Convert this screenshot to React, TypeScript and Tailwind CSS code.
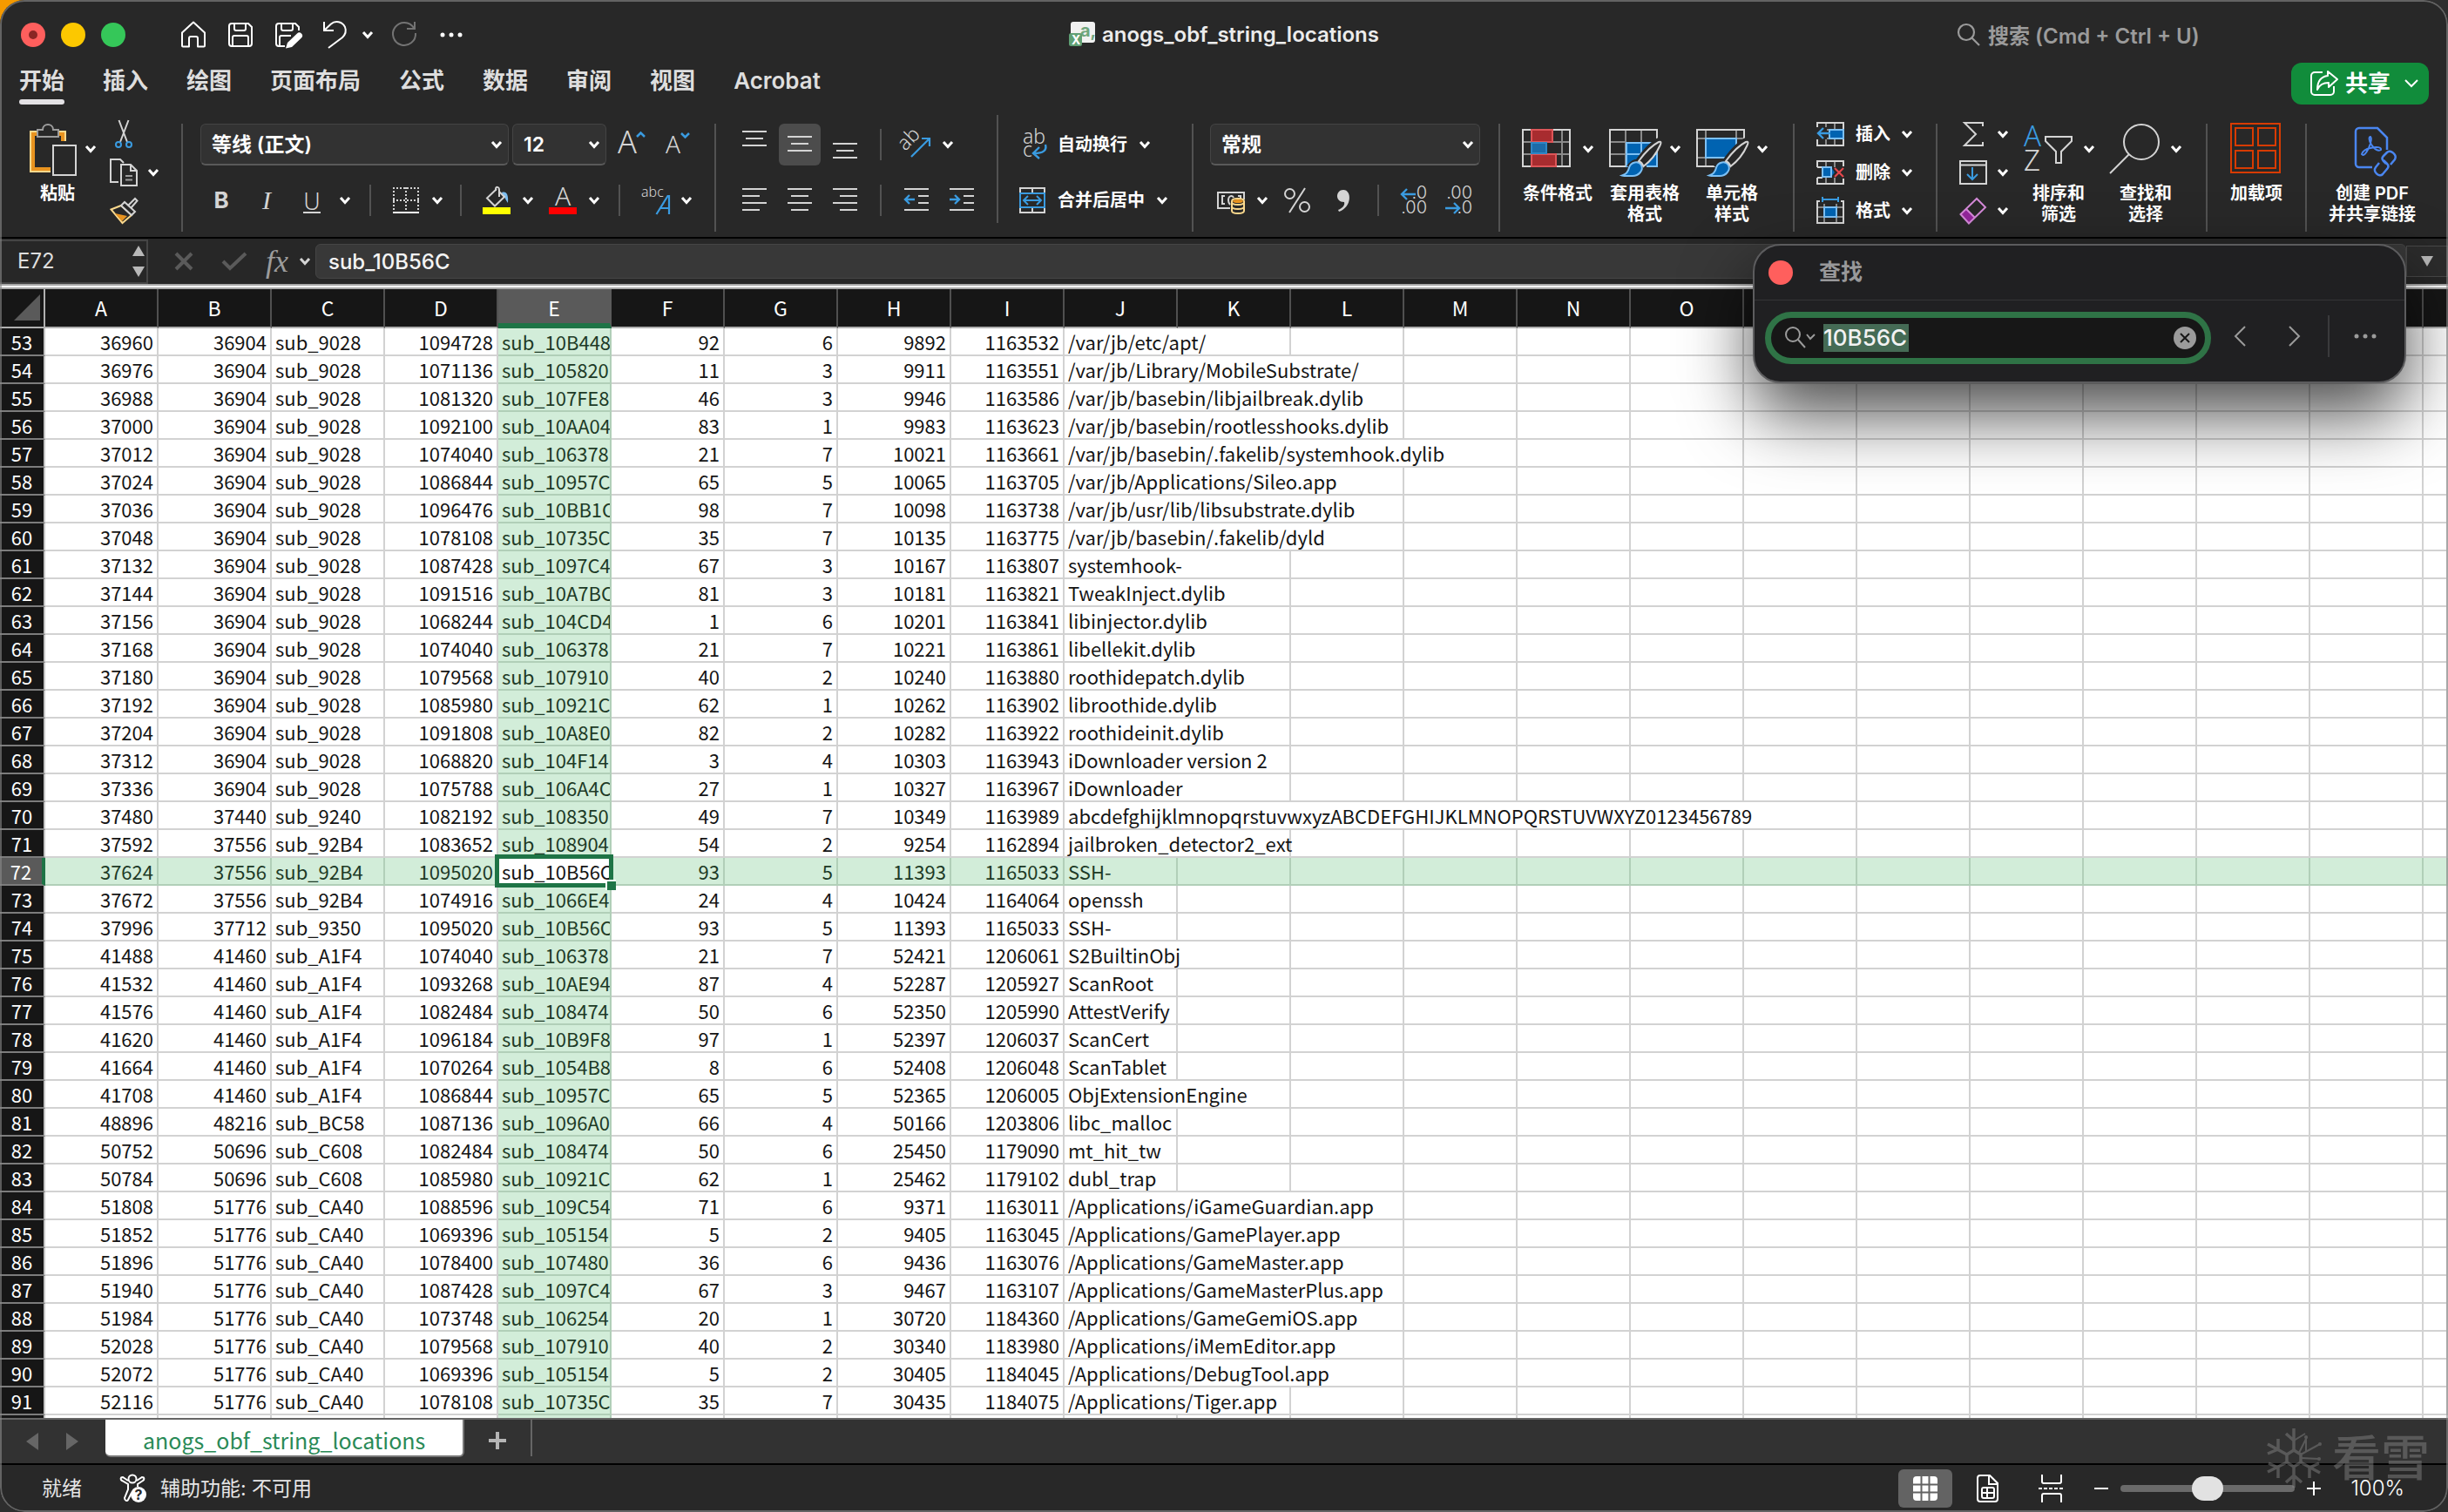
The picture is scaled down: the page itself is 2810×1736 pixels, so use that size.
import type { ReactNode } from 'react'
import clsx from 'clsx'

type Row = {
    a: number,
    b: number,
    c: string,
    d: number,
    e: string,
    f: number,
    g: number,
    h: number,
    i: number,
    j: string,
    span: number
}

// first visible row of the sheet
const FIRST_ROW = 53
const ACTIVE_ROW = 72

const COLUMNS = 'ABCDEFGHIJKLMNOPQRSTU'.split('')

// span = how many columns the text in J runs over
const raw: [number, number, string, number, string, number, number, number, number, string, number][] = [
    [36960, 36904, 'sub_9028', 1094728, 'sub_10B448', 92, 6, 9892, 1163532, '/var/jb/etc/apt/', 2],
    [36976, 36904, 'sub_9028', 1071136, 'sub_105820', 11, 3, 9911, 1163551, '/var/jb/Library/MobileSubstrate/', 3],
    [36988, 36904, 'sub_9028', 1081320, 'sub_107FE8', 46, 3, 9946, 1163586, '/var/jb/basebin/libjailbreak.dylib', 3],
    [37000, 36904, 'sub_9028', 1092100, 'sub_10AA04', 83, 1, 9983, 1163623, '/var/jb/basebin/rootlesshooks.dylib', 3],
    [37012, 36904, 'sub_9028', 1074040, 'sub_106378', 21, 7, 10021, 1163661, '/var/jb/basebin/.fakelib/systemhook.dylib', 4],
    [37024, 36904, 'sub_9028', 1086844, 'sub_10957C', 65, 5, 10065, 1163705, '/var/jb/Applications/Sileo.app', 3],
    [37036, 36904, 'sub_9028', 1096476, 'sub_10BB1C', 98, 7, 10098, 1163738, '/var/jb/usr/lib/libsubstrate.dylib', 3],
    [37048, 36904, 'sub_9028', 1078108, 'sub_10735C', 35, 7, 10135, 1163775, '/var/jb/basebin/.fakelib/dyld', 3],
    [37132, 36904, 'sub_9028', 1087428, 'sub_1097C4', 67, 3, 10167, 1163807, 'systemhook-', 2],
    [37144, 36904, 'sub_9028', 1091516, 'sub_10A7BC', 81, 3, 10181, 1163821, 'TweakInject.dylib', 2],
    [37156, 36904, 'sub_9028', 1068244, 'sub_104CD4', 1, 6, 10201, 1163841, 'libinjector.dylib', 2],
    [37168, 36904, 'sub_9028', 1074040, 'sub_106378', 21, 7, 10221, 1163861, 'libellekit.dylib', 2],
    [37180, 36904, 'sub_9028', 1079568, 'sub_107910', 40, 2, 10240, 1163880, 'roothidepatch.dylib', 2],
    [37192, 36904, 'sub_9028', 1085980, 'sub_10921C', 62, 1, 10262, 1163902, 'libroothide.dylib', 2],
    [37204, 36904, 'sub_9028', 1091808, 'sub_10A8E0', 82, 2, 10282, 1163922, 'roothideinit.dylib', 2],
    [37312, 36904, 'sub_9028', 1068820, 'sub_104F14', 3, 4, 10303, 1163943, 'iDownloader version 2', 2],
    [37336, 36904, 'sub_9028', 1075788, 'sub_106A4C', 27, 1, 10327, 1163967, 'iDownloader', 2],
    [37480, 37440, 'sub_9240', 1082192, 'sub_108350', 49, 7, 10349, 1163989, 'abcdefghijklmnopqrstuvwxyzABCDEFGHIJKLMNOPQRSTUVWXYZ0123456789', 7],
    [37592, 37556, 'sub_92B4', 1083652, 'sub_108904', 54, 2, 9254, 1162894, 'jailbroken_detector2_ext', 2],
    [37624, 37556, 'sub_92B4', 1095020, 'sub_10B56C', 93, 5, 11393, 1165033, 'SSH-', 1],
    [37672, 37556, 'sub_92B4', 1074916, 'sub_1066E4', 24, 4, 10424, 1164064, 'openssh', 1],
    [37996, 37712, 'sub_9350', 1095020, 'sub_10B56C', 93, 5, 11393, 1165033, 'SSH-', 1],
    [41488, 41460, 'sub_A1F4', 1074040, 'sub_106378', 21, 7, 52421, 1206061, 'S2BuiltinObj', 2],
    [41532, 41460, 'sub_A1F4', 1093268, 'sub_10AE94', 87, 4, 52287, 1205927, 'ScanRoot', 1],
    [41576, 41460, 'sub_A1F4', 1082484, 'sub_108474', 50, 6, 52350, 1205990, 'AttestVerify', 1],
    [41620, 41460, 'sub_A1F4', 1096184, 'sub_10B9F8', 97, 1, 52397, 1206037, 'ScanCert', 1],
    [41664, 41460, 'sub_A1F4', 1070264, 'sub_1054B8', 8, 6, 52408, 1206048, 'ScanTablet', 1],
    [41708, 41460, 'sub_A1F4', 1086844, 'sub_10957C', 65, 5, 52365, 1206005, 'ObjExtensionEngine', 2],
    [48896, 48216, 'sub_BC58', 1087136, 'sub_1096A0', 66, 4, 50166, 1203806, 'libc_malloc', 1],
    [50752, 50696, 'sub_C608', 1082484, 'sub_108474', 50, 6, 25450, 1179090, 'mt_hit_tw', 1],
    [50784, 50696, 'sub_C608', 1085980, 'sub_10921C', 62, 1, 25462, 1179102, 'dubl_trap', 1],
    [51808, 51776, 'sub_CA40', 1088596, 'sub_109C54', 71, 6, 9371, 1163011, '/Applications/iGameGuardian.app', 3],
    [51852, 51776, 'sub_CA40', 1069396, 'sub_105154', 5, 2, 9405, 1163045, '/Applications/GamePlayer.app', 3],
    [51896, 51776, 'sub_CA40', 1078400, 'sub_107480', 36, 6, 9436, 1163076, '/Applications/GameMaster.app', 3],
    [51940, 51776, 'sub_CA40', 1087428, 'sub_1097C4', 67, 3, 9467, 1163107, '/Applications/GameMasterPlus.app', 3],
    [51984, 51776, 'sub_CA40', 1073748, 'sub_106254', 20, 1, 30720, 1184360, '/Applications/GameGemiOS.app', 3],
    [52028, 51776, 'sub_CA40', 1079568, 'sub_107910', 40, 2, 30340, 1183980, '/Applications/iMemEditor.app', 3],
    [52072, 51776, 'sub_CA40', 1069396, 'sub_105154', 5, 2, 30405, 1184045, '/Applications/DebugTool.app', 3],
    [52116, 51776, 'sub_CA40', 1078108, 'sub_10735C', 35, 7, 30435, 1184075, '/Applications/Tiger.app', 2],
]

const rows: Row[] = raw.map(([a, b, c, d, e, f, g, h, i, j, span]) => ({ a, b, c, d, e, f, g, h, i, j, span }))

const GRAY = '#d4d4d4'
const BLUE = '#3a9be0'

/* ---------- small pieces ---------- */

function Svg({ w = 32, h = 32, className, children }: { w?: number, h?: number, className?: string, children: ReactNode }) {
    return (
        <svg width={w} height={h} viewBox={`0 0 ${w} ${h}`} fill="none" className={clsx('shrink-0 overflow-visible', className)} aria-hidden="true">
            {children}
        </svg>
    )
}

function Chevron({ className }: { className?: string }) {
    return (
        <Svg w={12} h={10} className={className}>
            <path d="M1 2l5 5.500L11 2" stroke="#fff" strokeWidth="3" />
        </Svg>
    )
}

function Divider({ className }: { className?: string }) {
    return <div className={clsx('h-[124px] w-0.5 shrink-0 bg-[#525252]', className)} />
}

function Sep({ className }: { className?: string }) {
    return <div className={clsx('h-9 w-0.5 shrink-0 bg-[#525252]', className)} />
}

function IconButton({ label, className, chevron = false, children }: { label: string, className?: string, chevron?: boolean, children: ReactNode }) {
    return (
        <button aria-label={label} className={clsx('flex shrink-0 items-center', className)}>
            {children}
            {chevron && <Chevron className="ml-3.5" />}
        </button>
    )
}

function Combo({ label, value, className }: { label: string, value: string, className?: string }) {
    return (
        <div className={clsx('relative h-12 shrink-0', className)}>
            <select
                aria-label={label}
                defaultValue={value}
                className="size-full appearance-none rounded-md border border-b-2 border-[#444] border-b-[#5a5a5a] bg-[#323232] pl-3 text-[23px] leading-[30px] font-semibold text-white"
            >
                <option>{value}</option>
            </select>
            <Chevron className="pointer-events-none absolute top-[19px] right-2" />
        </div>
    )
}

function BigButton({ lines, chevron = true, className, children }: { lines: string[], chevron?: boolean, className?: string, children: ReactNode }) {
    return (
        <button className={clsx('flex shrink-0 flex-col items-center', className)}>
            <span className="flex h-[60px] gap-2.5">
                {children}
                {chevron && <Chevron className="mt-6" />}
            </span>
            <span className="mt-2 flex flex-col text-xl leading-6 font-semibold whitespace-nowrap">
                {lines.map(line => <span key={line}>{line}</span>)}
            </span>
        </button>
    )
}

function Lines({ rows }: { rows: [number, number, number][] }) {
    return (
        <Svg w={28} h={32}>
            {rows.map(([x, y, w]) => <rect key={y} x={x} y={y} width={w} height="2" fill={GRAY} />)}
        </Svg>
    )
}

function TableBrush() {
    return (
        <>
            <path d="M33 46C42 33 52 23 59 20M24 51c8-12 20-3 12 6" stroke="#282828" strokeWidth="9" />
            <path d="M15 59.500c5-1.500 7-4 8-9 2-7 11-8 14-3 3 6-3 12.500-10 12.500-5 0-9 .5-12-.5z" fill="#0063b1" stroke="#7cc0f5" strokeWidth="2" />
            <path d="M34 43c8-11 17-19 23-22 3-1 3 1 1.500 4-4 9-11 18-19 24-1-3-3-5-5.500-6z" fill="#282828" stroke={GRAY} strokeWidth="2" />
        </>
    )
}

/* ---------- title bar ---------- */

function TitleBar() {
    return (
        <header className="grid h-20 grid-cols-[1fr_auto_1fr] items-center">
            <div className="flex items-center pl-6">
                <div className="flex gap-[18px]">
                    <button aria-label="关闭" className="flex size-7 items-center justify-center rounded-full bg-[#ff5f5d]">
                        <span className="size-2.5 rounded-full bg-[#8a2624]" />
                    </button>
                    <button aria-label="最小化" className="size-7 rounded-full bg-[#fcc800]" />
                    <button aria-label="缩放" className="size-7 rounded-full bg-[#35c759]" />
                </div>
                <div className="ml-[62px] flex gap-[22px]">
                    <IconButton label="主页">
                        <Svg><path d="M16 1.500 3 13.500V28.500a1 1 0 0 0 1 1h7V20a2 2 0 0 1 2-2h6a2 2 0 0 1 2 2v9.500h7a1 1 0 0 0 1-1v-15z" stroke="#fff" strokeWidth="2" strokeLinejoin="round" /></Svg>
                    </IconButton>
                    <IconButton label="保存">
                        <Svg><path d="M6 3h19l4 4v19a3 3 0 0 1-3 3H6a3 3 0 0 1-3-3V6a3 3 0 0 1 3-3zM9 3v6a2 2 0 0 0 2 2h9a2 2 0 0 0 2-2V3M7 29V19a2 2 0 0 1 2-2h14a2 2 0 0 1 2 2v10" stroke="#fff" strokeWidth="2" /></Svg>
                    </IconButton>
                    <IconButton label="另存为">
                        <Svg>
                            <path d="M13 29H6a3 3 0 0 1-3-3V6a3 3 0 0 1 3-3h19l4 4v4M9 3v6a2 2 0 0 0 2 2h9a2 2 0 0 0 2-2V3M7 29V19a2 2 0 0 1 2-2h11" stroke="#fff" strokeWidth="2" />
                            <path d="M14 31.500 16 25 27 14.500a3.500 3.500 0 0 1 5 5L21 30z" fill="#fff" />
                        </Svg>
                    </IconButton>
                    <IconButton label="撤消">
                        <Svg><path d="M4 1v10h11M4 11l8-7.500C17-1 25 1 28 7c2 5 0 9-3 12L9 31" stroke="#fff" strokeWidth="2" /></Svg>
                    </IconButton>
                </div>
                <IconButton label="撤消选项" className="ml-4"><Chevron /></IconButton>
                <IconButton label="恢复" className="ml-5">
                    <Svg><path d="M27 8A13 13 0 1 0 29 14M28 1v8h-9" stroke="#737373" strokeWidth="2" /></Svg>
                </IconButton>
                <IconButton label="更多" className="ml-6">
                    <Svg w={28} h={8}>
                        <circle cx="4" cy="4" r="2.500" fill="#fff" />
                        <circle cx="14" cy="4" r="2.500" fill="#fff" />
                        <circle cx="24" cy="4" r="2.500" fill="#fff" />
                    </Svg>
                </IconButton>
            </div>

            <h1 className="flex items-center gap-2 text-2xl font-semibold text-[#ececec]">
                <Svg w={30} h={30}>
                    <path d="M2 3a3 3 0 0 1 3-3h22a3 3 0 0 1 3 3v18a3 3 0 0 1-3 3H2z" fill="#f1f1f1" />
                    <text x="13" y="17" fontSize="20" fontWeight="700" fill="#6fa67c">a,</text>
                    <rect y="13" width="15" height="15" rx="2.500" fill="#5f9f74" />
                    <text x="3" y="26" fontSize="14" fontWeight="700" fill="#fff">X</text>
                </Svg>
                anogs_obf_string_locations
            </h1>

            <label className="flex items-center justify-end gap-2 pr-[240px] text-2xl font-semibold text-[#9b9b9b]">
                <Svg w={28} h={28}>
                    <circle cx="11" cy="11" r="9" stroke="#9b9b9b" strokeWidth="2.200" />
                    <path d="m17 17 9 9" stroke="#9b9b9b" strokeWidth="2.200" />
                </Svg>
                <input aria-label="搜索" placeholder="搜索 (Cmd + Ctrl + U)" className="w-[288px] bg-transparent pt-1 outline-none placeholder:text-[#9b9b9b] placeholder:opacity-100" />
            </label>
        </header>
    )
}

function TabStrip() {
    const tabs = ['开始', '插入', '绘图', '页面布局', '公式', '数据', '审阅', '视图', 'Acrobat']

    return (
        <div className="flex h-10 items-start justify-between pr-[22px] pl-[22px]">
            <nav className="flex items-start gap-11">
                {tabs.map((tab, n) => (
                    <button key={tab} className={clsx('text-[26px] leading-[26px] text-[#dedede]', n === 0 ? 'font-bold' : 'font-semibold')}>
                        {tab}
                        {n === 0 && <span className="mt-2 block h-1.5 rounded-full bg-[#e3e1e4]" />}
                    </button>
                ))}
            </nav>
            <button className="-mt-2 flex h-12 items-center rounded-xl bg-[#118c3b] pr-3 pl-[22px] text-[26px] leading-[30px] font-semibold text-white">
                <Svg>
                    <path d="M14 3H5a4 4 0 0 0-4 4v18a4 4 0 0 0 4 4h18a4 4 0 0 0 4-4v-6" stroke="#fff" strokeWidth="2" />
                    <path d="M20 2l11 9-10 9v-5c-7 0-11 3-13 8 0-9 4-15 12-16z" stroke="#fff" strokeWidth="2" strokeLinejoin="round" />
                </Svg>
                <span className="ml-2">共享</span>
                <Svg w={16} h={10} className="ml-4"><path d="m1 1 7 7 7-7" stroke="#fff" strokeWidth="2" /></Svg>
            </button>
        </div>
    )
}

/* ---------- ribbon ---------- */

function ClipboardGroup() {
    return (
        <div className="flex w-[208px] shrink-0 pl-[34px]">
            <button className="flex items-start">
                <span className="flex w-16 flex-col">
                    <Svg w={60} h={60}>
                        <path d="M41 20V9H1v46h23" stroke="#fbd98d" strokeWidth="2" />
                        <path d="M38 20v-8H4v40h20" stroke="#e8931f" strokeWidth="4" />
                        <path d="M9 7h6c0-8 12-8 12 0h6v8H9z" fill="#282828" stroke="#9c9c9c" strokeWidth="2" />
                        <path d="M27 25h26v34H27z" fill="#282828" stroke={GRAY} strokeWidth="2" />
                    </Svg>
                    <span className="mt-2 text-xl leading-6 font-semibold">粘贴</span>
                </span>
                <Chevron className="mt-6" />
            </button>
            <div className="-mt-1 ml-4 flex flex-col gap-3">
                <IconButton label="剪切">
                    <Svg>
                        <path d="m10.500 0 9.500 25M21.500 0 12 25" stroke={GRAY} strokeWidth="2" />
                        <circle cx="10" cy="28" r="3" stroke={BLUE} strokeWidth="2" />
                        <circle cx="22" cy="28" r="3" stroke={BLUE} strokeWidth="2" />
                    </Svg>
                </IconButton>
                <button aria-label="复制" className="flex items-center gap-3">
                    <Svg>
                        <path d="M10 27H1V1h11l4 4M13 7h11l7 7v17H13zM24 7v7h7" stroke={GRAY} strokeWidth="2" />
                        <path d="M18 20h8M18 24.500h8" stroke="#9c9c9c" strokeWidth="2" />
                    </Svg>
                    <Chevron />
                </button>
                <IconButton label="格式刷">
                    <Svg>
                        <path d="M1.500 14.500 13 10l12 11-10.500 9z" stroke="#fbd98d" strokeWidth="2" />
                        <path d="m6 19 14 3-6 6z" fill="#e8931f" />
                        <path d="m13 10 4-4 12 11-4 4zM21 10l8-8 2.500 2.500-7 8" stroke={GRAY} strokeWidth="2" fill="#282828" />
                    </Svg>
                </IconButton>
            </div>
        </div>
    )
}

function FontGroup() {
    return (
        <div className="flex w-[610px] shrink-0 flex-col gap-4 pl-5">
            <div className="flex h-12 items-center">
                <Combo label="字体" value="等线 (正文)" className="w-[354px]" />
                <Combo label="字号" value="12" className="ml-1 w-[108px]" />
                <IconButton label="增大字号" className="ml-3.5">
                    <Svg>
                        <text x="-1" y="26" fontSize="36" fontWeight="300" fill={GRAY} className="font-['Noto_Sans']">A</text>
                        <path d="m21 7 4.500-4.500L30 7" stroke={BLUE} strokeWidth="2.500" />
                    </Svg>
                </IconButton>
                <IconButton label="减小字号" className="ml-[22px]">
                    <Svg>
                        <text x="0" y="26" fontSize="28" fontWeight="300" fill={GRAY} className="font-['Noto_Sans']">A</text>
                        <path d="m18 3 4.500 4.500L27 3" stroke={BLUE} strokeWidth="2.500" />
                    </Svg>
                </IconButton>
            </div>
            <div className="flex h-12 items-center text-[#d4d4d4]">
                <button className="w-12 text-[26px] leading-8 font-bold">B</button>
                <button className="ml-1 w-12 font-['Liberation_Serif'] text-[30px] leading-8 italic">I</button>
                <button className="ml-1 flex w-12 justify-center font-['Noto_Sans'] text-[27px] leading-8 font-light">
                    <span className="h-[30px] border-b-2 border-[#d4d4d4]">U</span>
                </button>
                <Chevron className="ml-2" />
                <Sep className="ml-[22px]" />
                <IconButton label="边框" chevron className="ml-6">
                    <Svg>
                        <path d="M1 2h30M1 16h30M2 1v27M16 1v27M30 1v27" stroke={GRAY} strokeWidth="2" strokeDasharray="2 2" />
                        <path d="M1 30h30" stroke="#fff" strokeWidth="2" />
                    </Svg>
                </IconButton>
                <Sep className="ml-5" />
                <IconButton label="填充颜色" chevron className="ml-6">
                    <Svg>
                        <path d="M22 7c5-2 8 2 7 12-3-4-3-7-6-8z" fill="#7cbdf0" />
                        <path d="m19 12V4c0-4-4-4-4-1v2M16 3 5 13.500l9 9L25 12l-6-6" stroke={GRAY} strokeWidth="2" />
                        <path d="M0 24h32v8H0z" fill="#ff0" />
                    </Svg>
                </IconButton>
                <IconButton label="字体颜色" chevron className="ml-[18px]">
                    <Svg>
                        <text x="7" y="22" fontSize="30" fontWeight="300" fill={GRAY} className="font-['Noto_Sans']">A</text>
                        <path d="M0 24h32v8H0z" fill="red" />
                    </Svg>
                </IconButton>
                <Sep className="ml-[22px]" />
                <IconButton label="拼音指南" chevron className="ml-6">
                    <Svg>
                        <text x="0" y="12" fontSize="16" fill={GRAY} className="font-['Noto_Sans']" fontWeight="300">abc</text>
                        <path d="m17.500 32 13-21h1.500v21M22 25h9" stroke={BLUE} strokeWidth="2.200" />
                    </Svg>
                </IconButton>
            </div>
        </div>
    )
}

function AlignGroup() {
    return (
        <div className="flex w-[322px] shrink-0 flex-col gap-4 pl-[30px]">
            <div className="flex h-12 items-center">
                <IconButton label="顶端对齐"><Lines rows={[[0, 0, 28], [4, 8, 20], [0, 16, 28]]} /></IconButton>
                <IconButton label="垂直居中" className="ml-3.5 h-12 w-12 justify-center rounded-md bg-[#4c4c4c]">
                    <Lines rows={[[0, 6, 28], [4, 14, 20], [0, 22, 28]]} />
                </IconButton>
                <IconButton label="底端对齐" className="ml-3.5"><Lines rows={[[0, 14, 28], [4, 22, 20], [0, 30, 28]]} /></IconButton>
                <Sep className="ml-[26px]" />
                <IconButton label="方向" chevron className="ml-6">
                    <Svg>
                        <text x="3" y="24" fontSize="23" fill={GRAY} transform="rotate(-45 3 24)" fontWeight="300" className="font-['Noto_Sans']">ab</text>
                        <path d="M10 30 31 9M22 9h9v9" stroke={BLUE} strokeWidth="2.200" />
                    </Svg>
                </IconButton>
            </div>
            <div className="flex h-12 items-center">
                <IconButton label="左对齐"><Lines rows={[[0, 2, 28], [0, 10, 20], [0, 18, 28], [0, 26, 20]]} /></IconButton>
                <IconButton label="居中" className="ml-6"><Lines rows={[[0, 2, 28], [4, 10, 20], [0, 18, 28], [4, 26, 20]]} /></IconButton>
                <IconButton label="右对齐" className="ml-6"><Lines rows={[[0, 2, 28], [8, 10, 20], [0, 18, 28], [8, 26, 20]]} /></IconButton>
                <Sep className="ml-[26px]" />
                <IconButton label="减少缩进量" className="ml-[26px]">
                    <Svg w={28}>
                        <path d="M0 3h28M16 11h12M16 19h12M0 27h28" stroke={GRAY} strokeWidth="2" />
                        <path d="M12 15H2M6 10l-5 5 5 5" stroke={BLUE} strokeWidth="2.400" />
                    </Svg>
                </IconButton>
                <IconButton label="增加缩进量" className="ml-6">
                    <Svg w={28}>
                        <path d="M0 3h28M16 11h12M16 19h12M0 27h28" stroke={GRAY} strokeWidth="2" />
                        <path d="M0 15h10M6 10l5 5-5 5" stroke={BLUE} strokeWidth="2.400" />
                    </Svg>
                </IconButton>
            </div>
        </div>
    )
}

function WrapGroup() {
    return (
        <div className="flex w-[222px] shrink-0 flex-col gap-4 pl-6 text-xl font-semibold">
            <button className="flex h-12 items-center">
                <Svg>
                    <text x="4" y="15" fontSize="23" fontWeight="300" fill={GRAY} className="font-['Noto_Sans']">ab</text>
                    <text x="4" y="30" fontSize="23" fontWeight="300" fill={GRAY} className="font-['Noto_Sans']">c</text>
                    <path d="M30 16c2 7-3 10-13 10M23 19l-7 7 7 6" stroke={BLUE} strokeWidth="2.400" />
                </Svg>
                <span className="mr-3.5 ml-3">自动换行</span>
                <Chevron />
            </button>
            <button className="flex h-12 items-center">
                <Svg>
                    <path d="M1 8V2h28v6M1 24v6h28v-6M15 2v6M15 24v6" stroke={GRAY} strokeWidth="2" />
                    <path d="M1 8h28v16H1zM5 16h20M10 11l-5 5 5 5M20 11l5 5-5 5" stroke={BLUE} strokeWidth="2" />
                </Svg>
                <span className="mr-3.5 ml-3">合并后居中</span>
                <Chevron />
            </button>
        </div>
    )
}

function NumberGroup() {
    return (
        <div className="flex w-[350px] shrink-0 flex-col gap-4 pl-[19px]">
            <Combo label="数字格式" value="常规" className="w-[310px]" />
            <div className="flex h-12 items-center pl-2">
                <IconButton label="会计数字格式" chevron>
                    <Svg>
                        <path d="M15 25H1V7h30v8" stroke={GRAY} strokeWidth="2" />
                        <path d="M9 11H6v9h3M19 13c-1-3-6-3-6 3 0 3 1 4 2 5M24 11h3v3" stroke={GRAY} strokeWidth="2" />
                        <path d="M17 17v11c0 4 14 4 14 0V17c0-4-14-4-14 0z" fill="#282828" stroke="#fbd98d" strokeWidth="2" />
                        <ellipse cx="24" cy="17" rx="6" ry="2" fill="#e8931f" />
                        <path d="M17 18c0 4 14 4 14 0M17 23c0 4 14 4 14 0" stroke="#fbd98d" strokeWidth="2" />
                    </Svg>
                </IconButton>
                <IconButton label="百分比样式" className="ml-[18px]">
                    <Svg>
                        <circle cx="7.500" cy="8.500" r="5.500" stroke={GRAY} strokeWidth="2" />
                        <circle cx="24.500" cy="23.500" r="5.500" stroke={GRAY} strokeWidth="2" />
                        <path d="M25 2 7 30" stroke={GRAY} strokeWidth="2" />
                    </Svg>
                </IconButton>
                <IconButton label="千位分隔样式" className="ml-5">
                    <Svg><path d="M17 4c10 0 10 20-5 25l-1-2c5-2 8-5 7-9-11 0-10-14-1-14z" fill={GRAY} /></Svg>
                </IconButton>
                <Sep className="ml-6" />
                <IconButton label="增加小数位数" className="ml-6">
                    <Svg>
                        <text x="31" y="14" fontSize="20" textAnchor="end" fill={GRAY} fontWeight="300">.0</text>
                        <text x="31" y="31" fontSize="20" textAnchor="end" fill={GRAY} fontWeight="300">.00</text>
                        <path d="M18 9H2M8 3 2 9l6 6" stroke={BLUE} strokeWidth="2.400" />
                    </Svg>
                </IconButton>
                <IconButton label="减少小数位数" className="ml-5">
                    <Svg>
                        <text x="31" y="14" fontSize="20" textAnchor="end" fill={GRAY} fontWeight="300">.00</text>
                        <text x="31" y="31" fontSize="20" textAnchor="end" fill={GRAY} fontWeight="300">.0</text>
                        <path d="M0 25h16M10 19l6 6-6 6" stroke={BLUE} strokeWidth="2.400" />
                    </Svg>
                </IconButton>
            </div>
        </div>
    )
}

function StylesGroup() {
    return (
        <div className="flex w-[336px] shrink-0 pl-4">
            <BigButton lines={['条件格式']} className="w-[100px]">
                <Svg w={60} h={60}>
                    <path d="M11 7v42M46 7v42M1 21h54M1 35h54" stroke="#8a8a8a" strokeWidth="2" />
                    <path d="M1 7h54v42H1z" stroke={GRAY} strokeWidth="2" />
                    <path d="M29 22h16v12H29z" fill="#282828" />
                    <path d="M11 7h24v14H11zM11 35h28v14H11z" fill="#a82c2f" stroke="#dd5558" strokeWidth="2" />
                    <path d="M11 22h17v12H11z" fill="#1c6ba8" stroke="#2f86c4" strokeWidth="2" />
                </Svg>
            </BigButton>
            <BigButton lines={['套用表格', '格式']} className="w-[100px]">
                <Svg w={60} h={60}>
                    <path d="M19 7v42M37 7v14M1 21h18M1 35h18" stroke="#8a8a8a" strokeWidth="2" />
                    <path d="M19 49H1V7h54v14" stroke={GRAY} strokeWidth="2" />
                    <path d="M20 22h35v27H20z" fill="#0063b1" stroke="#7cc0f5" strokeWidth="2" />
                    <path d="M20 35h35M37 22v27" stroke="#7cc0f5" strokeWidth="2" />
                    <TableBrush />
                </Svg>
            </BigButton>
            <BigButton lines={['单元格', '样式']} className="w-[100px]">
                <Svg w={60} h={60}>
                    <path d="M11 7v42M46 7v10M1 17h54M1 39h10" stroke="#8a8a8a" strokeWidth="2" />
                    <path d="M30 49H1V7h54v11" stroke={GRAY} strokeWidth="2" />
                    <path d="M11 17h35v22H11z" fill="#0063b1" stroke="#7cc0f5" strokeWidth="2" />
                    <TableBrush />
                </Svg>
            </BigButton>
        </div>
    )
}

function CellsGroup() {
    return (
        <div className="-mt-1 flex w-[162px] shrink-0 flex-col gap-3 pl-[25px] text-xl leading-8 font-semibold">
            <button className="flex items-center gap-[13px]">
                <Svg>
                    <path d="M11 3v26M21 3v26M1 11h30M1 21h30" stroke="#8a8a8a" strokeWidth="2" />
                    <path d="M1 3h30v26H1z" stroke={GRAY} strokeWidth="2" />
                    <path d="M0 8h12v14H0z" fill="#282828" />
                    <path d="M15 11h16v10H15z" fill="#0063b1" stroke="#7cc0f5" strokeWidth="2" />
                    <path d="M16 15H2M8 9l-6 6 6 6" stroke={BLUE} strokeWidth="2.400" />
                </Svg>
                插入
                <Chevron />
            </button>
            <button className="flex items-center gap-[13px]">
                <Svg>
                    <path d="M11 3v7M21 3v7M11 22v7M21 22v7" stroke="#8a8a8a" strokeWidth="2" />
                    <path d="M1 10V3h30v6M1 22v7h30v-6M1 10h6M1 22h6" stroke={GRAY} strokeWidth="2" />
                    <path d="M7 10h10l4 6-4 5H7z" fill="#0063b1" />
                    <path d="M7 10h10v11H7z" stroke="#7cc0f5" strokeWidth="2" />
                    <path d="m21 11 10 10M31 11 21 21" stroke="#e5484d" strokeWidth="2.200" />
                </Svg>
                删除
                <Chevron />
            </button>
            <button className="flex items-center gap-[13px]">
                <Svg>
                    <path d="M9 8v22M23 8v22M1 12h30M1 23h30" stroke="#8a8a8a" strokeWidth="2" />
                    <path d="M4 5H1v25h30V5h-3" stroke={GRAY} strokeWidth="2" />
                    <path d="M9 12h14v11H9z" fill="#0063b1" stroke="#7cc0f5" strokeWidth="2" />
                    <path d="M7 0v6M25 0v6M7 3h18" stroke={BLUE} strokeWidth="2" />
                </Svg>
                格式
                <Chevron />
            </button>
        </div>
    )
}

function EditGroup() {
    return (
        <div className="flex w-[308px] shrink-0 pl-[25px]">
            <div className="-mt-1 flex flex-col gap-3">
                <button aria-label="自动求和" className="flex items-center gap-3">
                    <Svg><path d="M27 7V3H6l13 13L6 29h21v-4" stroke={GRAY} strokeWidth="2" /></Svg>
                    <Chevron />
                </button>
                <button aria-label="填充" className="flex items-center gap-3">
                    <Svg>
                        <path d="M1 3h30v26H1zM1 7.500h30" stroke={GRAY} strokeWidth="2" />
                        <path d="M15 10v14M9 18l6 6 6-6" stroke={BLUE} strokeWidth="2" />
                    </Svg>
                    <Chevron />
                </button>
                <button aria-label="清除" className="flex items-center gap-3">
                    <Svg>
                        <path d="m8 14 10 10-7 6L1.500 20z" fill="#93259b" />
                        <path d="M20 2 1.500 20 11 30.500 30 12zM8 14l10 10" stroke="#d58ad9" strokeWidth="2" />
                    </Svg>
                    <Chevron />
                </button>
            </div>
            <BigButton lines={['排序和', '筛选']} className="ml-2 w-[100px]">
                <Svg w={60} h={60}>
                    <text x="1" y="26" fontSize="33" fontWeight="300" fill={BLUE} className="font-['Noto_Sans']">A</text>
                    <text x="1" y="54" fontSize="33" fontWeight="300" fill={GRAY} className="font-['Noto_Sans']">Z</text>
                    <path d="M26 15h30v5L44 32v13h-6V32L26 20z" stroke={GRAY} strokeWidth="2" />
                </Svg>
            </BigButton>
            <BigButton lines={['查找和', '选择']} className="w-[100px]">
                <Svg w={60} h={60}>
                    <circle cx="36" cy="21" r="20" stroke={GRAY} strokeWidth="2" />
                    <path d="M22 35 0 57" stroke={GRAY} strokeWidth="2" />
                </Svg>
            </BigButton>
        </div>
    )
}

function Ribbon() {
    return (
        <div className="mt-[22px] flex h-[130px] items-start text-white">
            <ClipboardGroup />
            <Divider />
            <FontGroup />
            <Divider />
            <AlignGroup />
            <Divider className="-mt-2.5" />
            <WrapGroup />
            <Divider />
            <NumberGroup />
            <Divider />
            <StylesGroup />
            <Divider />
            <CellsGroup />
            <Divider />
            <EditGroup />
            <Divider />
            <BigButton lines={['加载项']} chevron={false} className="w-28">
                <Svg w={60} h={60}>
                    <path d="M1 0h56v56H1zM6 5h20v20H6zM32 5h20v20H32zM6 31h20v20H6zM32 31h20v20H32z" stroke="#d83b01" strokeWidth="2" />
                </Svg>
            </BigButton>
            <Divider />
            <BigButton lines={['创建 PDF', '并共享链接']} chevron={false} className="w-[150px]">
                <Svg w={60} h={60}>
                    <path d="M30 50H15a4 4 0 0 1-4-4V9a4 4 0 0 1 4-4h21l11 11v14" stroke="#4a86f0" strokeWidth="2.500" />
                    <path d="M18 35c2 3 5-1 8-7 3-7 4-11 2-13-2 0-2 4 1 9 4 6 8 8 11 6 1-3-5-4-12-2-6 1-9 4-10 7z" stroke="#4a86f0" strokeWidth="2" />
                    <path d="m46 46-3-3c-2-2-2-4 0-6l4-4c4-4 12 3 9 8l-5 6M43 42l4 4c2 2 2 4 0 6l-5 6c-4 4-12-3-8-8l4-5" stroke="#4a86f0" strokeWidth="2.500" />
                </Svg>
            </BigButton>
        </div>
    )
}

/* ---------- formula bar ---------- */

function FormulaBar() {
    return (
        <div className="flex h-[54px] shrink-0 items-center border-t-2 border-black bg-[#272727]">
            <div className="flex h-[51px] w-[170px] items-center justify-between border-2 border-l-0 border-[#454545] pr-0.5 pl-5">
                <input aria-label="名称框" defaultValue="E72" className="w-[100px] bg-transparent text-2xl text-[#dedede] outline-none" />
                <div className="flex flex-col gap-3">
                    <button aria-label="上一个"><Svg w={14} h={12}><path d="m7 0 7 12H0z" fill="#b8b8b8" /></Svg></button>
                    <button aria-label="下一个"><Svg w={14} h={12}><path d="M7 12 0 0h14z" fill="#b8b8b8" /></Svg></button>
                </div>
            </div>
            <IconButton label="取消" className="ml-[30px]">
                <Svg w={22} h={22}><path d="m2 2 18 18M20 2 2 20" stroke="#5a5a5a" strokeWidth="4" /></Svg>
            </IconButton>
            <IconButton label="输入" className="ml-8">
                <Svg w={30} h={22}><path d="m2 11 8 8L28 2" stroke="#5a5a5a" strokeWidth="4" /></Svg>
            </IconButton>
            <button className="ml-4 flex w-9 justify-center font-['Liberation_Serif'] text-[36px] leading-9 text-[#9c9c9c] italic">fx</button>
            <Chevron className="ml-2 opacity-80" />
            <input
                aria-label="编辑栏"
                defaultValue="sub_10B56C"
                className="ml-1.5 h-10 flex-1 rounded-md border border-[#454545] bg-[#383838] pl-3.5 text-2xl font-medium text-[#f4f4f4] outline-none"
            />
            <button aria-label="展开编辑栏" className="flex h-9 w-[48px] items-center justify-center border border-[#484848] bg-[#2c2c2c]">
                <Svg w={14} h={12}><path d="M7 12 0 0h14z" fill="#b8b8b8" /></Svg>
            </button>
        </div>
    )
}

/* ---------- sheet ---------- */

const cell = 'h-8 border-r-2 border-b-2 p-0 whitespace-nowrap leading-[30px]'

function SheetRow({ row, index }: { row: Row, index: number }) {
    const active = index === ACTIVE_ROW
    const tone = active ? 'border-[#b1cfb8] bg-[#d2edd9] text-[#1d3a26]' : 'border-[#d2d2d2]'
    const num = clsx(cell, tone, 'pr-1 text-right')
    const text = clsx(cell, tone, 'pl-1 text-left')

    return (
        <tr>
            <th
                scope="row"
                className={clsx(
                    'h-8 border-b-2 p-0 text-center leading-[30px] font-normal text-white',
                    active ? 'border-r-4 border-r-[#1e7446] border-b-[#7c7c7c] bg-[#5a5a5a]' : 'border-r-2 border-r-[#c4c4c4] border-b-[#7c7c7c] bg-[#161616]'
                )}
            >
                {index}
            </th>
            <td className={num}>{row.a}</td>
            <td className={num}>{row.b}</td>
            <td className={text}>{row.c}</td>
            <td className={num}>{row.d}</td>
            {active ? (
                <td className="relative h-8 border-r-2 border-b-2 border-[#b1cfb8] bg-white p-0 pl-1 leading-[30px]">
                    <div className="w-[124px] overflow-hidden">{row.e}</div>
                    <div className="absolute -inset-1 border-[5px] border-[#1e7446]" />
                    <div className="absolute -right-[7px] -bottom-[7px] size-3 border-t-2 border-l-2 border-white bg-[#1e7446]" />
                </td>
            ) : (
                <td className={clsx(cell, 'overflow-hidden border-[#b1cfb8] bg-[#d2edd9] pl-1 text-left text-[#1d3a26]')}>{row.e}</td>
            )}
            <td className={num}>{row.f}</td>
            <td className={num}>{row.g}</td>
            <td className={num}>{row.h}</td>
            <td className={num}>{row.i}</td>
            <td colSpan={row.span} className={text}>{row.j}</td>
            {Array.from({ length: 13 - row.span }, (_, n) => <td key={n} className={clsx(cell, tone)} />)}
        </tr>
    )
}

function Sheet() {
    return (
        <div className="min-h-0 flex-1 overflow-hidden bg-white">
            <table className="w-full table-fixed border-separate border-spacing-0 font-['Noto_Sans_CJK_SC',sans-serif] text-[22px] text-[#141414]">
                <colgroup>
                    <col className="w-[52px]" />
                    {COLUMNS.map(name => <col key={name} className="w-[130px]" />)}
                    <col />
                </colgroup>
                <thead>
                    <tr>
                        <th aria-label="全选" className="h-11 border-r-2 border-b-2 border-[#b0b0b0] bg-[#161616] p-0">
                            <Svg w={30} h={30} className="ml-4"><path d="M30 0v30H0z" fill="#5a5a5a" /></Svg>
                        </th>
                        {COLUMNS.map(name => (
                            <th
                                key={name}
                                scope="col"
                                className={clsx(
                                    'h-11 border-r-2 p-0 text-center text-[23px] font-normal text-white',
                                    name === 'E' ? 'border-b-[6px] border-r-[#5a5a5a] border-b-[#1e7446] bg-[#5a5a5a] pt-1' : 'border-b-2 border-r-[#505050] border-b-[#b0b0b0] bg-[#161616]'
                                )}
                            >
                                {name}
                            </th>
                        ))}
                        <th className="h-11 border-b-2 border-[#b0b0b0] bg-[#161616] p-0" />
                    </tr>
                </thead>
                <tbody>
                    {rows.map((row, n) => <SheetRow key={n} row={row} index={FIRST_ROW + n} />)}
                    <tr>
                        <th className="h-8 border-r-2 border-[#c4c4c4] bg-[#161616]" />
                        {COLUMNS.map(name => (
                            <td key={name} className={clsx('h-8 border-r-2', name === 'E' ? 'border-[#b1cfb8] bg-[#d2edd9]' : 'border-[#d2d2d2]')} />
                        ))}
                        <td />
                    </tr>
                </tbody>
            </table>
        </div>
    )
}

/* ---------- bottom bars ---------- */

function SheetTabs() {
    return (
        <div className="flex h-[52px] shrink-0 items-start border-t-2 border-[#666] bg-[#323232]">
            <div className="flex h-[50px] w-[121px] items-center gap-8 pl-[30px]">
                <button aria-label="上一张工作表"><Svg w={14} h={20}><path d="M14 0v20L0 10z" fill="#666" /></Svg></button>
                <button aria-label="下一张工作表"><Svg w={14} h={20}><path d="M0 0v20l14-10z" fill="#666" /></Svg></button>
            </div>
            <button className="h-[43px] rounded-b-md border-r-2 border-b-2 border-[#777] bg-white px-[43px] pt-1 font-['Noto_Sans_CJK_SC',sans-serif] text-[25px] leading-9 text-[#2a8a57]">
                anogs_obf_string_locations
            </button>
            <button aria-label="新建工作表" className="flex h-12 w-[76px] items-center justify-center">
                <Svg w={20} h={20}><path d="M10 0v20M0 10h20" stroke="#b5b5b5" strokeWidth="4" /></Svg>
            </button>
            <div className="h-[42px] w-0.5 bg-[#666]" />
        </div>
    )
}

function StatusBar() {
    return (
        <footer className="flex h-14 shrink-0 items-center border-t-2 border-black bg-[#282828] text-[23px] text-[#e6e6e6]">
            <span className="pl-12">就绪</span>
            <button className="ml-11 flex items-center gap-4">
                <Svg w={30} h={34}>
                    <circle cx="14" cy="6" r="4.500" stroke="#fff" strokeWidth="2" />
                    <path d="M9 8 3 4C0 4 0 7 2 8l7 4v6L5 28c0 3 3 4 4 2l4-8M19 8l6-4c3 0 3 3 1 4l-6 4v3" stroke="#fff" strokeWidth="2" />
                    <circle cx="21" cy="24" r="9" fill="#fff" />
                    <text x="21" y="30" fontSize="16" fontWeight="700" textAnchor="middle" fill="#282828">?</text>
                </Svg>
                辅助功能: 不可用
            </button>

            <div className="ml-auto flex items-center pr-[50px]">
                <button aria-label="普通视图" className="flex h-11 w-[62px] items-center justify-center rounded-md bg-[#636363]">
                    <Svg w={28} h={28}>
                        <rect width="28" height="28" rx="4" fill="#fff" />
                        <path d="M9.500 0v28M18.500 0v28M0 9.500h28M0 18.500h28" stroke="#636363" strokeWidth="2" />
                    </Svg>
                </button>
                <button aria-label="页面布局视图" className="ml-7">
                    <Svg w={26}>
                        <path d="M4 1h11l9 9v18a3 3 0 0 1-3 3H4a3 3 0 0 1-3-3V4a3 3 0 0 1 3-3zM14 1v10h10" stroke="#fff" strokeWidth="2" />
                        <rect x="6" y="15" width="14" height="12" rx="2" stroke="#fff" strokeWidth="2" />
                        <path d="M12 15v12M6 21h14" stroke="#fff" strokeWidth="2" />
                    </Svg>
                </button>
                <button aria-label="分页预览" className="ml-[45px]">
                    <Svg w={30}>
                        <path d="M4 0v8a2 2 0 0 0 2 2h18a2 2 0 0 0 2-2V0M4 32v-8a2 2 0 0 1 2-2h18a2 2 0 0 1 2 2v8" stroke="#fff" strokeWidth="2" />
                        <path d="M0 16h30" stroke="#fff" strokeWidth="2" strokeDasharray="4 2" />
                    </Svg>
                </button>
                <button aria-label="缩小" className="ml-[34px]"><Svg w={16} h={16}><path d="M0 8h16" stroke="#fff" strokeWidth="2" /></Svg></button>
                <input
                    type="range"
                    aria-label="显示比例"
                    defaultValue={50}
                    className="ml-3.5 h-7 w-[200px] appearance-none bg-transparent [&::-webkit-slider-runnable-track]:h-2 [&::-webkit-slider-runnable-track]:rounded-full [&::-webkit-slider-runnable-track]:bg-[#6a6a6a] [&::-webkit-slider-thumb]:-mt-2.5 [&::-webkit-slider-thumb]:h-7 [&::-webkit-slider-thumb]:w-9 [&::-webkit-slider-thumb]:appearance-none [&::-webkit-slider-thumb]:rounded-[14px] [&::-webkit-slider-thumb]:bg-[#e2e2e2]"
                />
                <button aria-label="放大" className="ml-3.5"><Svg w={16} h={16}><path d="M0 8h16M8 0v16" stroke="#fff" strokeWidth="2" /></Svg></button>
                <span className="ml-[34px] text-2xl font-light text-white">100%</span>
            </div>
        </footer>
    )
}

/* ---------- overlays ---------- */

function FindDialog() {
    return (
        <section
            aria-label="查找"
            className="absolute top-[280px] right-[48px] flex h-[160px] w-[750px] flex-col rounded-[32px] border-2 border-[#5c5c5e] bg-[#202022] shadow-[0_36px_80px_rgba(0,0,0,0.7)]"
        >
            <div className="flex h-[63px] items-center gap-[30px] border-b border-[#343436] pl-4 text-[25px] font-bold text-[#98989a]">
                <button aria-label="关闭" className="size-7 rounded-full bg-[#ff5f5d]" />
                查找
            </div>
            <div className="flex flex-1 items-center pb-3 pl-3">
                <label className="mt-1 flex h-[60px] w-[512px] items-center rounded-full border-[7px] border-[#2f7346] bg-[#171717] pr-2.5 pl-4">
                    <Svg w={36} h={28}>
                        <circle cx="9" cy="10" r="8" stroke="#9b9b9b" strokeWidth="2" />
                        <path d="m15 16 8 9M25 10l4 5 5-5" stroke="#9b9b9b" strokeWidth="2" />
                    </Svg>
                    <input aria-label="查找内容" defaultValue="10B56C" className="ml-2 h-8 w-[98px] bg-[#456b55] text-[26px] font-medium text-[#f2f2f2] outline-none" />
                    <IconButton label="清除" className="ml-auto">
                        <Svg w={26} h={26}>
                            <circle cx="13" cy="13" r="13" fill="#9b9b9b" />
                            <path d="m8 8 10 10M18 8 8 18" stroke="#171717" strokeWidth="2" />
                        </Svg>
                    </IconButton>
                </label>
                <IconButton label="上一个" className="ml-[26px]"><Svg w={14} h={24}><path d="M13 1 2 12l11 11" stroke="#9b9b9b" strokeWidth="2" /></Svg></IconButton>
                <IconButton label="下一个" className="ml-[49px]"><Svg w={14} h={24}><path d="m1 1 11 11L1 23" stroke="#9b9b9b" strokeWidth="2" /></Svg></IconButton>
                <div className="ml-[31px] h-12 w-0.5 bg-[#3a3a3c]" />
                <IconButton label="更多选项" className="ml-7">
                    <Svg w={26} h={6}>
                        <circle cx="3" cy="3" r="2.500" fill="#9b9b9b" />
                        <circle cx="13" cy="3" r="2.500" fill="#9b9b9b" />
                        <circle cx="23" cy="3" r="2.500" fill="#9b9b9b" />
                    </Svg>
                </IconButton>
            </div>
        </section>
    )
}

function Watermark() {
    return (
        <div className="pointer-events-none absolute right-[21px] bottom-[28px] flex items-center gap-3 text-[56px] leading-[68px] font-medium text-[#8a8a8a] opacity-45">
            <Svg w={64} h={68}>
                <g stroke="#8a8a8a" strokeWidth="3.500">
                    <path d="M32 25l8 5v9l-8 5-8-5v-9z" />
                    <path d="M32 25V0M32 44v24M24 30 2 18M24 39 2 50M40 39l22 12M32 14l-9-8M32 54l-9 8M32 54l9 8M14 24V12M14 24 2 29M14 45 3 40M14 45v12M50 45v12M50 45l11-5" />
                </g>
                <path d="m40 30 22-12M40 34l21 1M38 28l9-18M32 14l13-8M46 26V12" stroke="#8a8a8a" strokeWidth="2" />
                <circle cx="62" cy="18" r="2" fill="#8a8a8a" />
                <circle cx="46" cy="10" r="2" fill="#8a8a8a" />
                <circle cx="61" cy="35" r="2" fill="#8a8a8a" />
            </Svg>
            <span>看雪</span>
        </div>
    )
}

export default function App() {
    return (
        <div className="h-screen bg-[linear-gradient(135deg,#f59a00_2%,#2e2e2e_3%)] font-['Inter','Noto_Sans_CJK_SC',sans-serif]">
            <main className="relative flex h-full flex-col overflow-hidden rounded-[28px] bg-[#282828]">
                <TitleBar />
                <TabStrip />
                <Ribbon />
                <FormulaBar />
                <div className="h-1.5 shrink-0 border-y-2 border-[#a8a8a8] bg-white" />
                <Sheet />
                <SheetTabs />
                <StatusBar />
                <FindDialog />
                <Watermark />
                <div className="pointer-events-none absolute inset-0 rounded-[28px] border-2 border-[#8a8a8a]/60" />
            </main>
        </div>
    )
}
